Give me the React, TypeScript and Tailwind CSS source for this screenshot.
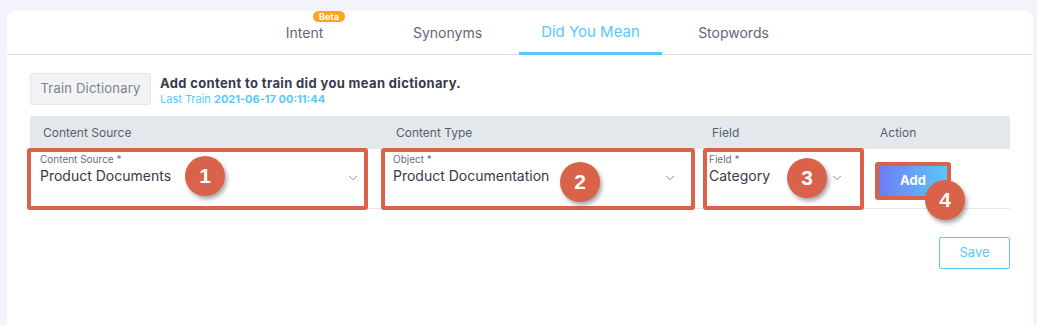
import { ChevronDown } from "lucide-react";

type Tab = {
  label: string;
  active?: boolean;
  badge?: string;
};

const tabs: Tab[] = [
  { label: "Intent", badge: "Beta" },
  { label: "Synonyms" },
  { label: "Did You Mean", active: true },
  { label: "Stopwords" },
];

const Marker = ({ n, className }: { n: number; className: string }) => (
  <span
    className={`absolute flex h-[40px] w-[40px] items-center justify-center rounded-full bg-[#d9634a] text-[21px] font-bold text-white shadow-[2px_3px_4px_rgba(0,0,0,0.35)] ${className}`}
    style={{ fontFamily: "'Liberation Sans', Arial, sans-serif" }}
  >
    {n}
  </span>
);

const SelectBox = ({
  label,
  value,
  width,
  className,
  children,
}: {
  label: string;
  value: string;
  width: string;
  className: string;
  children?: React.ReactNode;
}) => (
  <div
    className={`relative -my-[1px] h-[62px] shrink-0 rounded-[3px] border-[4px] border-[#d9634a] ${width} ${className}`}
  >
    <div className="pt-[1px] text-[10px] leading-[12px] text-[#6b6f7b]">{label}</div>
    <div className="flex items-center justify-between pr-[4px]">
      <span className="text-[14px] leading-[22px] text-[#383a48]">{value}</span>
      <ChevronDown size={14} strokeWidth={1.6} className="mt-[4px] text-[#7d88a8]" />
    </div>
    {children}
  </div>
);

const App = () => {
  return (
    <div
      className="h-[325px] overflow-hidden bg-[#f3f4fb] pl-[7px] pr-[4px] pt-[11px]"
      style={{ fontFamily: "Inter, 'Noto Sans', sans-serif" }}
    >
      <div className="h-[330px] rounded-t-[9px] bg-white">
        <div className="flex h-[44px] border-b border-[#e1e2e6] pl-[226px]">
          {tabs.map((tab) => (
            <div
              key={tab.label}
              className={`relative flex w-[143px] items-center justify-center text-[14px] ${
                tab.active
                  ? "-mb-[1px] border-b-[3px] border-[#5ac8fa] pt-[2px] text-[15px] text-[#5ac8fa]"
                  : "text-[#666678]"
              }`}
            >
              {tab.badge && (
                <span className="absolute left-[80px] top-0 rounded-full bg-[#f5a623] px-[6px] text-[9px] font-bold leading-[11px] text-white">
                  {tab.badge}
                </span>
              )}
              {tab.label}
            </div>
          ))}
        </div>

        <div className="px-[23px] pt-[18px]">
          <div className="flex items-start gap-[9px]">
            <button
              type="button"
              className="h-[32px] w-[121px] rounded-[2px] border border-[#e4e6ea] bg-[#f2f3f5] text-[13px] tracking-[0.2px] text-[#7b8190]"
            >
              Train Dictionary
            </button>
            <div className="pt-[1px]">
              <div className="text-[13px] font-bold leading-[18px] tracking-[0.35px] text-[#393a4c]">
                Add content to train did you mean dictionary.
              </div>
              <div className="text-[11px] leading-[14px] text-[#5ac8fa]">
                Last Train <span className="font-bold">2021-06-17 00:11:44</span>
              </div>
            </div>
          </div>

          <div className="mt-[10px]">
            <div className="flex h-[33px] items-center bg-[#e2e8ec] text-[12px] text-[#5a5f6b]">
              <div className="w-[353px] pl-[13px]">Content Source</div>
              <div className="w-[316px] pl-[13px]">Content Type</div>
              <div className="w-[168px] pl-[13px]">Field</div>
              <div className="pl-[13px]">Action</div>
            </div>
            <div className="flex h-[60px] border-b border-[#e6e8eb]">
              <div className="w-[353px] shrink-0">
                <SelectBox
                  label="Content Source *"
                  value="Product Documents"
                  width="w-[341px]"
                  className="-ml-[3px] pl-[9px]"
                >
                  <Marker n={1} className="left-[154px] top-[4px]" />
                </SelectBox>
              </div>
              <div className="w-[316px] shrink-0">
                <SelectBox
                  label="Object *"
                  value="Product Documentation"
                  width="w-[314px]"
                  className="-ml-[2px] pl-[8px] pr-[10px]"
                >
                  <Marker n={2} className="left-[175px] top-[10px]" />
                </SelectBox>
              </div>
              <div className="w-[168px] shrink-0">
                <SelectBox
                  label="Field *"
                  value="Category"
                  width="w-[161px]"
                  className="ml-[4px] pl-[2px] pr-[12px]"
                >
                  <Marker n={3} className="left-[80px] top-[6px]" />
                </SelectBox>
              </div>
              <div className="pt-[13px]">
                <div className="relative ml-[8px] h-[38px] w-[76px] rounded-[3px] border-[4px] border-[#d9634a]">
                  <button
                    type="button"
                    className="h-full w-full bg-gradient-to-r from-[#6c7cf3] to-[#56c6fb] text-[13px] font-bold text-white"
                  >
                    Add
                  </button>
                  <Marker n={4} className="left-[46px] top-[14px]" />
                </div>
              </div>
            </div>
          </div>

          <div className="mt-[28px] flex justify-end">
            <button
              type="button"
              className="h-[32px] w-[71px] rounded-[2px] border border-[#5ac8fa] text-[13px] text-[#5ac8fa]"
            >
              Save
            </button>
          </div>
        </div>
      </div>
    </div>
  );
};

export default App;
